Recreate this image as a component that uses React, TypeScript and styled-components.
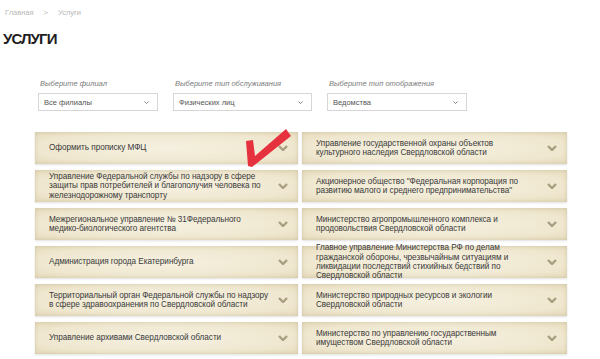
import styled, { createGlobalStyle } from 'styled-components';

const GlobalStyle = createGlobalStyle`
	body {
		margin: 0;
		background: #ffffff;
		font-family: 'Liberation Sans', Arial, sans-serif;
	}
`;

const Page = styled.div`
	position: relative;
	width: 600px;
	height: 359px;
	overflow: hidden;
	padding: 8px 0 0 5px;
	box-sizing: border-box;
`;

const Breadcrumbs = styled.div`
	display: flex;
	align-items: center;
	gap: 10px;
	font-size: 7.5px;
	color: #b8b8b8;
	height: 9px;
`;

const Title = styled.h1`
	margin: 13px 0 0 -2px;
	font-family: 'Liberation Sans', sans-serif;
	font-size: 15px;
	font-weight: 700;
	letter-spacing: -0.9px;
	color: #1e1e1e;
	line-height: 18px;
`;

const Filters = styled.div`
	display: flex;
	gap: 15px;
	margin: 31px 0 0 33px;
`;

const Filter = styled.div<{ $width: number }>`
	display: flex;
	flex-direction: column;
	gap: 5px;
	width: ${(p) => p.$width}px;
`;

const FilterLabel = styled.span`
	font-size: 7.5px;
	font-style: italic;
	color: #7a7a7a;
	padding-left: 2px;
	line-height: 9px;
`;

const Select = styled.div`
	display: flex;
	align-items: center;
	justify-content: space-between;
	height: 18px;
	box-sizing: border-box;
	border: 1px solid #d6d6d6;
	padding: 0 8px 0 5px;
	font-size: 7.5px;
	color: #555;
`;

const Grid = styled.div`
	display: grid;
	grid-template-columns: 263px 265px;
	grid-auto-rows: 32px;
	column-gap: 4px;
	row-gap: 6px;
	margin: 21px 0 0 30px;
`;

const Card = styled.div`
	display: flex;
	align-items: center;
	justify-content: space-between;
	gap: 3px;
	padding: 0 10px 0 14px;
	background: radial-gradient(ellipse at 50% 50%, #f5f0e0 0%, #efe7cf 70%, #e6dcbf 100%);
	box-shadow: inset 0 0 4px rgba(170, 150, 100, 0.35), 0 1px 2px rgba(0, 0, 0, 0.12);
	font-size: 8.2px;
	line-height: 9.3px;
	letter-spacing: -0.05px;
	color: #3a3a3a;
`;

const CardText = styled.span`
	flex: 1;
	white-space: pre-line;
`;

const Chevron = ({ size = 10, color = '#a99e80', weight = 2.4 }) => (
	<svg width={size} height={size * 0.6} viewBox="0 0 10 6">
		<path d="M1 1 L5 5 L9 1" fill="none" stroke={color} strokeWidth={weight} />
	</svg>
);

const Arrow = styled.svg`
	position: absolute;
	left: 240px;
	top: 125px;
	width: 55px;
	height: 45px;
`;

const filters = [
	{ label: 'Выберите филиал', value: 'Все филиалы', width: 120 },
	{ label: 'Выберите тип обслуживания', value: 'Физических лиц', width: 139 },
	{ label: 'Выберите тип отображения', value: 'Ведомства', width: 140 },
];

// lines broken where the site breaks them
const services = [
	'Оформить прописку МФЦ',
	'Управление государственной охраны объектов\nкультурного наследия Свердловской области',
	'Управление Федеральной службы по надзору в сфере\nзащиты прав потребителей и благополучия человека по\nжелезнодорожному транспорту',
	'Акционерное общество "Федеральная корпорация по\nразвитию малого и среднего предпринимательства"',
	'Межрегиональное управление № 31Федерального\nмедико-биологического агентства',
	'Министерство агропромышленного комплекса и\nпродовольствия Свердловской области',
	'Администрация города Екатеринбурга',
	'Главное управление Министерства РФ по делам\nгражданской обороны, чрезвычайным ситуациям и\nликвидации последствий стихийных бедствий по\nСвердловской области',
	'Территориальный орган Федеральной службы по надзору\nв сфере здравоохранения по Свердловской области',
	'Министерство природных ресурсов и экологии\nСвердловской области',
	'Управление архивами Свердловской области',
	'Министерство по управлению государственным\nимуществом Свердловской области',
];

export default function App() {
	return (
		<Page>
			<GlobalStyle />
			<Breadcrumbs>
				<span>Главная</span>
				<span>&gt;</span>
				<span>Услуги</span>
			</Breadcrumbs>
			<Title>УСЛУГИ</Title>
			<Filters>
				{filters.map((f) => (
					<Filter key={f.label} $width={f.width}>
						<FilterLabel>{f.label}</FilterLabel>
						<Select>
							<span>{f.value}</span>
							<Chevron size={5} color="#666" weight={1.6} />
						</Select>
					</Filter>
				))}
			</Filters>
			<Grid>
				{services.map((s) => (
					<Card key={s}>
						<CardText>{s}</CardText>
						<Chevron />
					</Card>
				))}
			</Grid>
			<Arrow viewBox="240 125 55 45">
				<polygon
					points="246,141 253,140 255,156 286,129 291,136 252,167 248,166"
					fill="#e5323e"
				/>
			</Arrow>
		</Page>
	);
}
